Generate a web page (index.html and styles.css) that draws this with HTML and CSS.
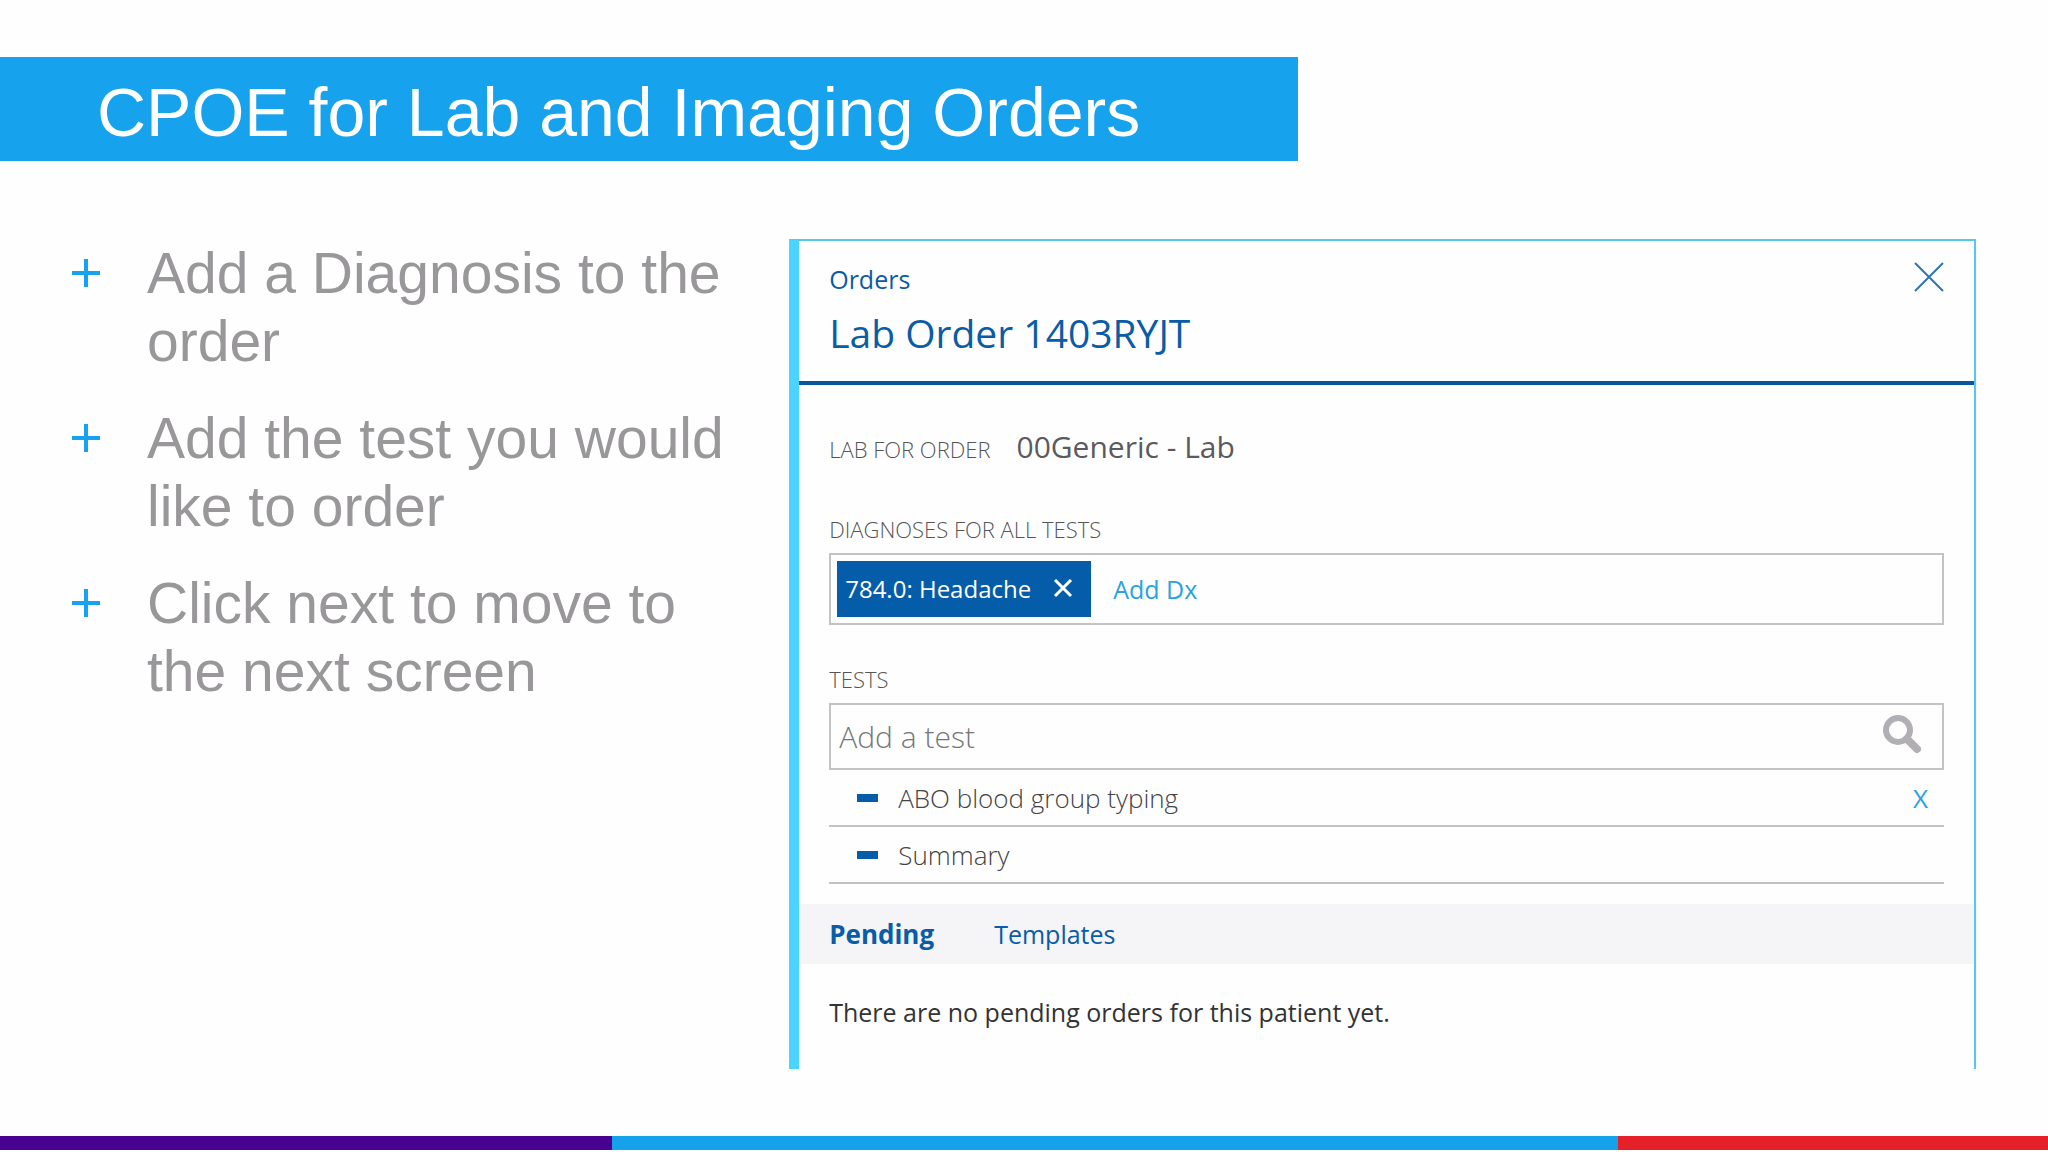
FILE: index.html
```html
<!DOCTYPE html>
<html lang="en">
  <head>
    <meta charset="UTF-8" />
    <meta name="viewport" content="width=device-width, initial-scale=1.0" />
    <title>CPOE for Lab and Imaging Orders</title>
    <link rel="stylesheet" href="styles.css">
  </head>
  <body>
    <header class="title-bar">
      <h1>CPOE for Lab and Imaging Orders</h1>
    </header>

    <main class="content">
      <ul class="steps">
        <li>Add a Diagnosis to the order</li>
        <li>Add the test you would like to order</li>
        <li>Click next to move to the next screen</li>
      </ul>

      <section class="panel">
        <div class="panel-header">
          <div>
            <a href="#" class="breadcrumb">Orders</a>
            <h2>Lab Order 1403RYJT</h2>
          </div>
          <button type="button" class="close" aria-label="Close">
            <svg width="30" height="30" viewBox="0 0 30 30" fill="none" stroke="#2f74b3" stroke-width="2">
              <path d="M1 1l28 28M29 1L1 29" />
            </svg>
          </button>
        </div>

        <form class="order-form">
          <div class="lab">
            <span class="label">LAB FOR ORDER</span>
            <span class="lab-name">00Generic - Lab</span>
          </div>

          <span class="label">DIAGNOSES FOR ALL TESTS</span>
          <div class="box diagnoses">
            <span class="chip">
              784.0: Headache
              <button type="button" aria-label="Remove diagnosis">
                <svg width="20" height="20" viewBox="0 0 20 20" fill="none" stroke="#fff" stroke-width="3">
                  <path d="M2 1l16 16M18 1L2 17" />
                </svg>
              </button>
            </span>
            <a href="#" class="add-dx">Add Dx</a>
          </div>

          <label for="test" class="label">TESTS</label>
          <div class="box search">
            <input type="text" id="test" name="test" placeholder="Add a test" />
            <svg width="38" height="44" viewBox="0 0 38 44" fill="none" stroke="#b1afb3">
              <circle cx="15" cy="15" r="12" stroke-width="6" />
              <path d="M24 24l10 10" stroke-width="8" stroke-linecap="round" />
            </svg>
          </div>

          <ul class="tests">
            <li>
              <span class="dash"></span>
              <span class="test-name">ABO blood group typing</span>
              <button type="button" class="remove" aria-label="Remove test">X</button>
            </li>
            <li>
              <span class="dash"></span>
              <span class="test-name">Summary</span>
            </li>
          </ul>
        </form>

        <nav class="tabs">
          <button type="button" class="active">Pending</button>
          <button type="button">Templates</button>
        </nav>
        <p class="empty">There are no pending orders for this patient yet.</p>
      </section>
    </main>

    <footer class="stripe">
      <span class="purple"></span>
      <span class="blue"></span>
      <span class="red"></span>
    </footer>
  </body>
</html>
```
FILE: styles.css
```css
* {
  box-sizing: border-box;
}
body {
  margin: 0;
  min-height: 100vh;
  display: flex;
  flex-direction: column;
  background-color: #fefefe;
  font-family: "Liberation Sans", Arial, sans-serif;
}
h1,
h2,
p,
ul {
  margin: 0;
  padding: 0;
  font-weight: normal;
}
ul {
  list-style: none;
}
button {
  padding: 0;
  border: none;
  background: none;
  font: inherit;
  color: inherit;
  cursor: pointer;
}
a {
  text-decoration: none;
}
svg {
  display: block;
}

/* title */
.title-bar {
  width: 63.4%;
  margin-top: 57px;
  padding: 6px 0 0 97px;
  background-color: #17a2ee;
  color: #fff;
}
.title-bar h1 {
  font-size: 68px;
  line-height: 98px;
  white-space: nowrap;
}

.content {
  flex: 1;
  display: grid;
  grid-template-columns: 133fr 200fr;
  align-items: start;
  padding: 78px 72px 0 0;
}

/* steps */
.steps {
  padding: 0 40px 0 72px;
  font-size: 57px;
  line-height: 68px;
  color: #99979a;
}
.steps li {
  position: relative;
  padding-left: 75px;
  margin-bottom: 29px;
}
.steps li::before {
  content: "";
  position: absolute;
  left: 0;
  top: 20px;
  width: 28px;
  height: 28px;
  background:
    linear-gradient(#17a2ee, #17a2ee) center / 28px 4px no-repeat,
    linear-gradient(#17a2ee, #17a2ee) center / 4px 28px no-repeat;
}

/* order panel */
.panel {
  border: 2px solid #55c8f0;
  border-left: 10px solid #4bd4ff;
  border-bottom: none;
  font-family: "Open Sans", sans-serif;
  font-size: 25px;
  line-height: 36px;
  color: #333;
}
.panel-header {
  display: flex;
  justify-content: space-between;
  align-items: flex-start;
  padding: 20px 30px 22px;
  border-bottom: 4px solid #07569f;
  color: #0a5ca6;
}
.breadcrumb {
  display: block;
  color: inherit;
}
.panel-header h2 {
  font-size: 39px;
  line-height: 52px;
  margin-top: 10px;
}
.close {
  margin-top: 1px;
}
.order-form {
  padding: 42px 30px 0;
}
.label {
  display: block;
  font-size: 22px;
  font-weight: 300;
  line-height: 30px;
  color: #555;
}
.lab {
  display: flex;
  align-items: baseline;
  gap: 26px;
  margin-bottom: 47px;
}
.lab-name {
  font-size: 30px;
  line-height: 40px;
  color: #5c5a5d;
}
.box {
  display: flex;
  align-items: center;
  margin-top: 9px;
  border: 2px solid #c5c2c6;
}
.diagnoses {
  gap: 22px;
  padding: 6px;
  margin-bottom: 39px;
}
.chip {
  display: flex;
  align-items: center;
  gap: 22px;
  padding: 0 18px 0 8px;
  line-height: 56px;
  font-size: 24px;
  font-weight: 500;
  background-color: #055ca8;
  color: #fff;
}
.add-dx {
  color: #29a3dd;
}
.search {
  padding-right: 21px;
}
.search input {
  flex: 1;
  height: 63px;
  padding: 0 8px;
  border: none;
  outline: none;
  background: none;
  font: 300 30px "Open Sans", sans-serif;
}
.search input::placeholder {
  color: #777;
}
.tests li {
  display: flex;
  align-items: center;
  height: 57px;
  padding: 0 16px 0 28px;
  border-bottom: 2px solid #c5c2c6;
  font-size: 26px;
}
.dash {
  width: 21px;
  height: 8px;
  margin-right: 20px;
  background-color: #055ca8;
}
.test-name {
  flex: 1;
  font-weight: 300;
  color: #444;
}
.remove {
  color: #29a3dd;
}
.tabs {
  display: flex;
  gap: 60px;
  margin-top: 20px;
  padding: 0 30px;
  background-color: #f5f4f7;
  line-height: 60px;
  color: #0a5ca6;
}
.tabs .active {
  font-size: 26px;
  font-weight: bold;
}
.empty {
  padding: 30px 30px 39px;
}

/* bottom stripe */
.stripe {
  display: flex;
  height: 14px;
  margin-bottom: 2px;
}
.purple {
  flex: 612;
  background-color: #48008f;
}
.blue {
  flex: 1006;
  background-color: #15a2ea;
}
.red {
  flex: 430;
  background-color: #e62028;
}
```
